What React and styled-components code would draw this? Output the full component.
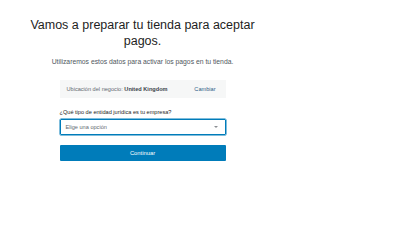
import React from 'react';
import styled, { createGlobalStyle } from 'styled-components';

const GlobalStyle = createGlobalStyle`
  html, body {
    margin: 0;
    padding: 0;
    background: #fff;
  }
  body {
    font-family: 'Liberation Sans', Arial, sans-serif;
    color: #1e1e1e;
  }
`;

const Page = styled.div`
  width: 285px;
  height: 220px;
  display: flex;
  flex-direction: column;
  align-items: center;
  padding-top: 17px;
  box-sizing: border-box;
`;

const Heading = styled.h1`
  margin: 0;
  max-width: 240px;
  font-size: 12.5px;
  font-weight: 400;
  line-height: 16px;
  text-align: center;
  color: #1e1e1e;
`;

const Lead = styled.p`
  margin: 8px 0 0;
  font-size: 6.8px;
  line-height: 9px;
  color: #50575e;
  text-align: center;
`;

const Form = styled.div`
  width: 166px;
  margin-top: 14px;
  display: flex;
  flex-direction: column;
`;

const LocationBox = styled.div`
  height: 18px;
  padding: 0 10px 0 7px;
  background: #f6f7f7;
  display: flex;
  align-items: center;
  justify-content: space-between;
  font-size: 5.6px;
  color: #646970;
`;

const Strong = styled.span`
  color: #3c434a;
  font-weight: 600;
`;

const LinkButton = styled.span`
  color: #2c5a85;
  font-size: 5.6px;
`;

const Label = styled.label`
  margin-top: 10px;
  font-size: 5.6px;
  line-height: 8px;
  color: #1e1e1e;
`;

const Select = styled.div`
  margin-top: 3px;
  height: 16px;
  box-sizing: border-box;
  border: 1px solid #007cba;
  box-shadow: 0 0 0 0.5px #007cba;
  border-radius: 1px;
  padding: 0 7px 0 5px;
  display: flex;
  align-items: center;
  justify-content: space-between;
  font-size: 5.6px;
  color: #646970;
`;

const Caret = styled.span`
  width: 0;
  height: 0;
  border-left: 2.5px solid transparent;
  border-right: 2.5px solid transparent;
  border-top: 2.5px solid #8c8f94;
`;

const Button = styled.button`
  margin-top: 10px;
  height: 16px;
  border: none;
  border-radius: 1px;
  background: #007cba;
  color: #fff;
  font-family: inherit;
  font-size: 5.8px;
  padding: 0;
`;

export default function App() {
  return (
    <>
      <GlobalStyle />
      <Page>
        <Heading>Vamos a preparar tu tienda para aceptar pagos.</Heading>
        <Lead>Utilizaremos estos datos para activar los pagos en tu tienda.</Lead>
        <Form>
          <LocationBox>
            <span>
              Ubicación del negocio: <Strong>United Kingdom</Strong>
            </span>
            <LinkButton>Cambiar</LinkButton>
          </LocationBox>
          <Label>¿Qué tipo de entidad jurídica es tu empresa?</Label>
          <Select>
            <span>Elige una opción</span>
            <Caret />
          </Select>
          <Button>Continuar</Button>
        </Form>
      </Page>
    </>
  );
}
